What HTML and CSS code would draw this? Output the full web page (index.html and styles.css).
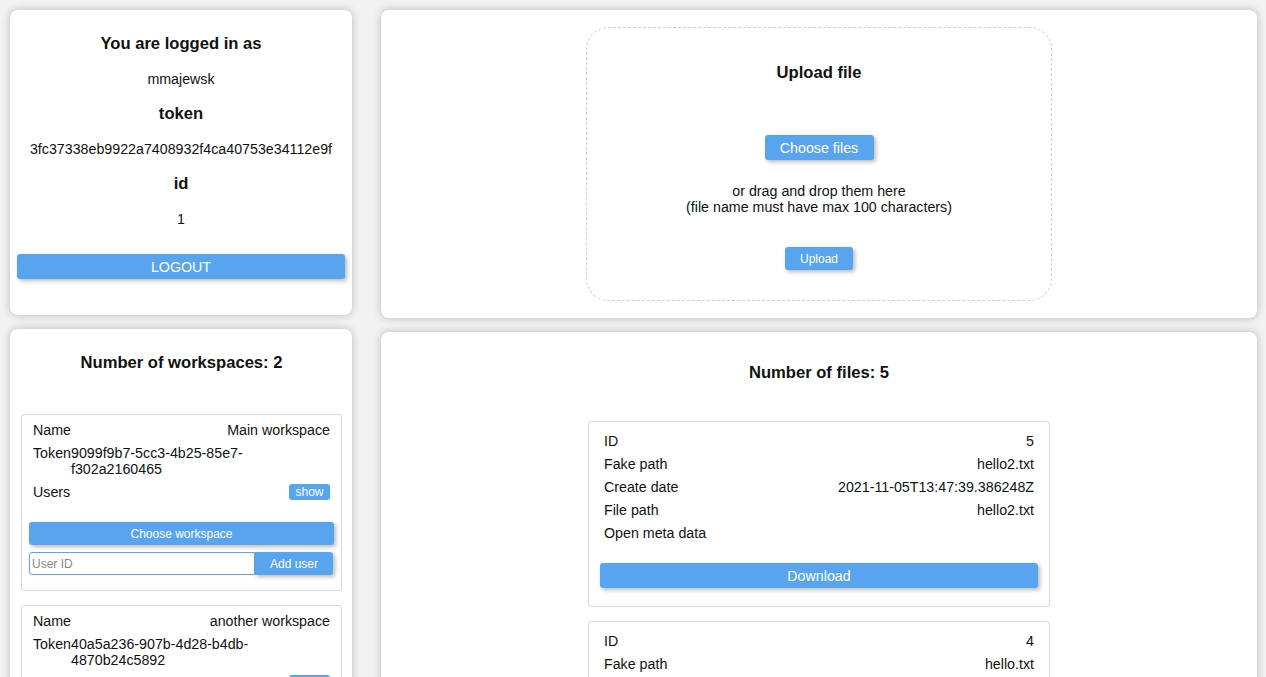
FILE: index.html
```html
<!DOCTYPE html>
<html lang="en">
<head>
<meta charset="utf-8">
<title>Files</title>
<link rel="stylesheet" href="styles.css">
</head>
<body>
<div class="page">
  <div class="col col-left">
    <section class="card user-card">
      <h3 class="title">You are logged in as</h3>
      <p class="val">mmajewsk</p>
      <h3 class="title">token</h3>
      <p class="val">3fc37338eb9922a7408932f4ca40753e34112e9f</p>
      <h3 class="title">id</h3>
      <p class="val">1</p>
      <div class="logout-wrap">
        <button class="btn btn-wide btn-md">LOGOUT</button>
      </div>
    </section>

    <section class="card ws-card">
      <h3 class="title ws-title">Number of workspaces: 2</h3>
      <div class="ws-list">
        <div class="ws-box">
          <div class="row"><span>Name</span><span>Main workspace</span></div>
          <div class="row tok-row"><span>Token</span><span class="tok">9099f9b7-5cc3-4b25-85e7-f302a2160465</span></div>
          <div class="row"><span>Users</span><button class="btn btn-show">show</button></div>
          <button class="btn btn-wide btn-sm choose-ws">Choose workspace</button>
          <div class="add-row">
            <input class="uid" type="text" placeholder="User ID">
            <button class="btn btn-sm btn-add">Add user</button>
          </div>
        </div>
        <div class="ws-box">
          <div class="row"><span>Name</span><span>another workspace</span></div>
          <div class="row tok-row"><span>Token</span><span class="tok">40a5a236-907b-4d28-b4db-4870b24c5892</span></div>
          <div class="row"><span>Users</span><button class="btn btn-show">show</button></div>
          <button class="btn btn-wide btn-sm choose-ws">Choose workspace</button>
          <div class="add-row">
            <input class="uid" type="text" placeholder="User ID">
            <button class="btn btn-sm btn-add">Add user</button>
          </div>
        </div>
      </div>
    </section>
  </div>

  <div class="col col-right">
    <section class="card upload-card">
      <div class="drop">
        <h3 class="title drop-title">Upload file</h3>
        <button class="btn btn-md btn-choose">Choose files</button>
        <p class="drop-text">or drag and drop them here<br>(file name must have max 100 characters)</p>
        <button class="btn btn-sm btn-upload">Upload</button>
      </div>
    </section>

    <section class="card files-card">
      <h3 class="title files-title">Number of files: 5</h3>
      <div class="file-list">
        <div class="file-box">
          <div class="frow"><span>ID</span><span>5</span></div>
          <div class="frow"><span>Fake path</span><span>hello2.txt</span></div>
          <div class="frow"><span>Create date</span><span>2021-11-05T13:47:39.386248Z</span></div>
          <div class="frow"><span>File path</span><span>hello2.txt</span></div>
          <div class="frow"><span>Open meta data</span><span></span></div>
          <button class="btn btn-wide btn-md btn-dl">Download</button>
        </div>
        <div class="file-box">
          <div class="frow"><span>ID</span><span>4</span></div>
          <div class="frow"><span>Fake path</span><span>hello.txt</span></div>
          <div class="frow"><span>Create date</span><span>2021-11-05T13:41:12.104533Z</span></div>
          <div class="frow"><span>File path</span><span>hello.txt</span></div>
          <div class="frow"><span>Open meta data</span><span></span></div>
          <button class="btn btn-wide btn-md btn-dl">Download</button>
        </div>
        <div class="file-box">
          <div class="frow"><span>ID</span><span>3</span></div>
          <div class="frow"><span>Fake path</span><span>notes.txt</span></div>
          <div class="frow"><span>Create date</span><span>2021-11-04T18:22:05.551902Z</span></div>
          <div class="frow"><span>File path</span><span>notes.txt</span></div>
          <div class="frow"><span>Open meta data</span><span></span></div>
          <button class="btn btn-wide btn-md btn-dl">Download</button>
        </div>
      </div>
    </section>
  </div>
</div>
</body>
</html>
```

FILE: styles.css
```css
* { box-sizing: border-box; }

html, body {
  margin: 0;
  background: #f2f2f2;
}

body {
  font-family: "Liberation Sans", Arial, sans-serif;
  font-size: 14.24px;
  color: #111;
}

.page {
  display: grid;
  grid-template-columns: 342px 876px;
  column-gap: 29px;
  padding: 10px 9px 10px 10px;
  align-items: start;
}

.col {
  display: flex;
  flex-direction: column;
  gap: 14px;
}

.card {
  background: #fff;
  border-radius: 8px;
  box-shadow: 0 0 8px rgba(0, 0, 0, 0.24);
}

.title {
  font-size: 16.6px;
  line-height: 20px;
  font-weight: bold;
  text-align: center;
  margin: 17px 0;
}

.val {
  text-align: center;
  line-height: 16px;
  margin: 14px 0;
}

.btn {
  border: none;
  background: #58a4ee;
  color: #fff;
  font-family: "Liberation Sans", Arial, sans-serif;
  border-radius: 3px;
  box-shadow: 2px 2px 4px rgba(0, 0, 0, 0.28);
  cursor: pointer;
  padding: 0;
}

.btn-md { font-size: 14.24px; height: 25px; }
.btn-sm { font-size: 12px; height: 23px; }
.btn-wide { display: block; width: 100%; }

/* user card */
.user-card {
  padding: 7px 7px 36px;
}

.logout-wrap {
  margin-top: 27px;
}

/* workspaces */
.ws-card {
  padding: 7px 10px 14px 11px;
}

.ws-title { margin-bottom: 0; }

.ws-list {
  margin-top: 41px;
  display: flex;
  flex-direction: column;
  gap: 14px;
}

.ws-box {
  border: 1px solid #d8d8d8;
  border-radius: 3px;
  padding: 3.5px 7px 15px;
}

.row {
  display: flex;
  justify-content: space-between;
  align-items: center;
  line-height: 16px;
  padding: 3.5px 4px;
}

.tok-row { align-items: flex-start; }

.tok { text-align: left; }

.btn-show {
  font-size: 12px;
  height: 16px;
  width: 41px;
  line-height: 16px;
  box-shadow: none;
}

.choose-ws {
  margin-top: 18.5px;
}

.add-row {
  display: flex;
  margin-top: 7px;
  height: 23px;
}

.uid {
  width: 226px;
  height: 23px;
  border: 1px solid #58a4ee;
  border-radius: 3px 0 0 3px;
  font-family: "Liberation Sans", Arial, sans-serif;
  font-size: 12px;
  padding: 0 2px;
  outline: none;
  color: #111;
}

.uid::placeholder { color: #888; }

.btn-add {
  width: 78px;
  border-radius: 0 3px 3px 0;
}

/* upload */
.upload-card {
  padding: 17px 0;
}

.drop {
  width: 466px;
  height: 274px;
  margin: 0 auto;
  border: 1px dashed #cfcfcf;
  border-radius: 22px;
  padding-top: 35px;
  display: flex;
  flex-direction: column;
  align-items: center;
}

.drop-title { margin: 0; }

.btn-choose {
  margin-top: 52px;
  width: 109px;
}

.drop-text {
  margin: 23px 0 0;
  line-height: 16px;
  text-align: center;
}

.btn-upload {
  margin-top: 32px;
  width: 68px;
}

/* files */
.files-card {
  padding: 31px 0 20px;
}

.files-title { margin: 0; }

.file-list {
  margin-top: 38px;
  display: flex;
  flex-direction: column;
  align-items: center;
  gap: 14px;
}

.file-box {
  width: 462px;
  border: 1px solid #d8d8d8;
  border-radius: 3px;
  padding: 8px 11px 18px;
}

.frow {
  display: flex;
  justify-content: space-between;
  line-height: 23px;
  padding: 0 4px;
}

.btn-dl {
  margin-top: 18px;
}
```
